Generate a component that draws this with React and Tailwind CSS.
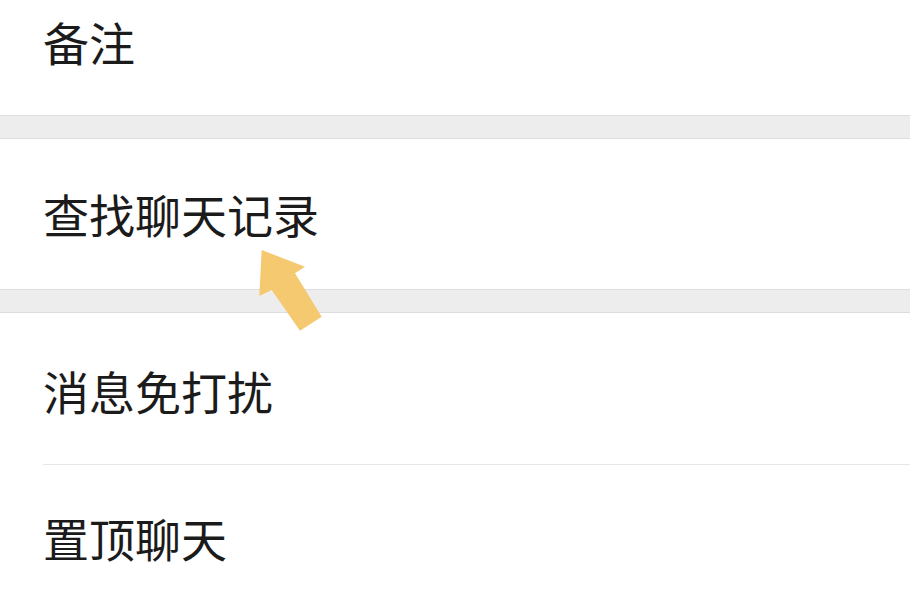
import React from "react";

const font = { fontFamily: '"Noto Sans CJK SC", "Noto Sans", sans-serif' };

function Row({ children, className = "" }) {
  return (
    <div className={`flex items-center pl-[43px] text-[46px] leading-none text-[#1b1b1b] ${className}`}>
      <span>{children}</span>
    </div>
  );
}

function Band() {
  return <div className="h-[24px] border-y border-[#dddddd] bg-[#ededed]" />;
}

export default function App() {
  return (
    <div className="relative h-[606px] w-[910px] overflow-hidden bg-white" style={font}>
      <Row className="h-[115px] pb-[33px]">备注</Row>
      <Band />
      <Row className="h-[150px] pb-[2px]">查找聊天记录</Row>
      <Band />
      <Row className="h-[151px] pt-[3px]">消息免打扰</Row>
      <div className="ml-[43px] h-px bg-[#e6e6e6]" />
      <Row className="h-[150px] pb-[6px]">置顶聊天</Row>
      <svg
        className="absolute left-0 top-0"
        width="910"
        height="606"
        viewBox="0 0 910 606"
      >
        <polygon
          points="261.7,250 305,266.7 295,273.3 321.7,316.7 300,330.7 271.7,290 259.3,296"
          fill="#f5c970"
        />
      </svg>
    </div>
  );
}
